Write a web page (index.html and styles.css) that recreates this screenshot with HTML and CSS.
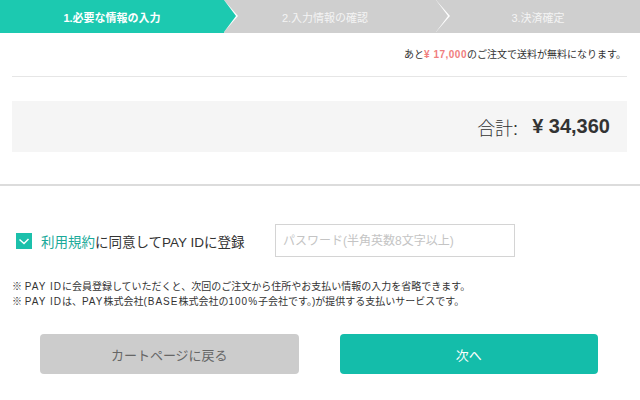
FILE: index.html
```html
<!DOCTYPE html>
<html lang="ja">
<head>
  <meta charset="UTF-8">
  <title>ご購入手続き</title>
  <link rel="stylesheet" href="styles.css">
</head>
<body>
  <!-- progress steps -->
  <ol class="steps">
    <li class="step step-1 current">1.必要な情報の入力</li>
    <li class="step step-2">2.入力情報の確認</li>
    <li class="step step-3">3.決済確定</li>
  </ol>

  <div class="content">
    <p class="shipping">あと<span class="price-left">¥ 17,000</span>のご注文で送料が無料になります。</p>

    <div class="total">
      <span class="total-label">合計:</span>
      <span class="total-price">¥ 34,360</span>
    </div>
  </div>

  <div class="register">
    <div class="register-row">
      <label class="agree">
        <span class="checkbox">
          <svg width="16" height="16" viewBox="0 0 16 16"><polyline points="3.5,6.5 8,10.5 12.5,6" fill="none" stroke="#fff" stroke-width="1.5"/></svg>
        </span>
        <span class="agree-text"><span class="terms">利用規約</span>に同意してPAY IDに登録</span>
      </label>
      <input class="password" type="password" placeholder="パスワード(半角英数8文字以上)">
    </div>

    <p class="notes">
      ※ <span class="latin">PAY ID</span>に会員登録していただくと、次回のご注文から住所やお支払い情報の入力を省略できます。<br>
      ※ <span class="latin">PAY ID</span>は、<span class="latin">PAY</span>株式会社<span class="latin">(BASE</span>株式会社の<span class="latin">100%</span>子会社です。)が提供する支払いサービスです。
    </p>

    <div class="buttons">
      <a class="btn btn-back" href="#">カートページに戻る</a>
      <a class="btn btn-next" href="#">次へ</a>
    </div>
  </div>
</body>
</html>
```

FILE: styles.css
```css
html {
  box-sizing: border-box;
}

*, *:before, *:after {
  box-sizing: inherit;
}

body {
  margin: 0;
  background: #fff;
  color: #333;
  font-family: "Liberation Sans", "Noto Sans CJK JP", sans-serif;
  font-size: 10px;
}

/* steps */
.steps {
  display: flex;
  margin: 0;
  padding: 0;
  list-style: none;
  height: 33px;
  background: #cfcfcf;
}

.step {
  position: relative;
  display: flex;
  align-items: center;
  justify-content: center;
  height: 33px;
  color: #f4f4f4;
  font-size: 11px;
  background: #cfcfcf;
}

.step-1 { width: 224px; z-index: 3; }
.step-2 { width: 212px; z-index: 2; padding-right: 10px; }
.step-3 { flex: 1; z-index: 1; }

.step.current {
  background: #1cc9b0;
  color: #fff;
  font-weight: bold;
}

.step-1::before,
.step-1::after,
.step-2::before,
.step-2::after {
  content: "";
  position: absolute;
  top: 0;
  width: 0;
  height: 0;
  border-top: 16.5px solid transparent;
  border-bottom: 16.5px solid transparent;
}

.step-1::before,
.step-2::before {
  right: -14px;
  border-left: 14px solid #fff;
}

.step-1::after,
.step-2::after {
  right: -12px;
  border-left: 12px solid #cfcfcf;
}

.step-1::after {
  border-left-color: #1cc9b0;
}

/* summary */
.content {
  padding: 0 13px 0 12px;
}

.shipping {
  margin: 15px 0 0;
  padding: 0 1px 14px 0;
  line-height: 14px;
  text-align: right;
  border-bottom: 1px solid #e6e6e6;
}

.price-left {
  color: #f07e7e;
  font-weight: bold;
  letter-spacing: 0.5px;
}

.total {
  display: flex;
  justify-content: flex-end;
  align-items: center;
  gap: 14px;
  margin-top: 24px;
  height: 51px;
  padding-right: 17px;
  background: #f5f5f5;
}

.total-label {
  font-size: 18px;
  font-weight: 300;
}

.total-price {
  font-size: 20px;
  font-weight: bold;
}

/* register */
.register {
  margin-top: 32px;
  border-top: 2px solid #dcdcdc;
}

.register-row {
  display: flex;
  align-items: center;
  margin-top: 38px;
  padding-left: 16px;
}

.agree {
  display: flex;
  align-items: center;
  gap: 9px;
  width: 259px;
  font-size: 13.5px;
}

.checkbox {
  display: flex;
  width: 16px;
  height: 16px;
  background: #1cc0ab;
}

.terms {
  color: #1aa999;
}

.password {
  width: 240px;
  height: 33px;
  padding: 0 7px;
  border: 1px solid #d4d4d4;
  font-family: inherit;
  font-size: 12px;
}

.password::placeholder {
  color: #c4c4c4;
}

.notes {
  margin: 22px 0 0;
  padding-left: 12px;
  line-height: 15px;
  font-size: 10px;
}

.latin {
  letter-spacing: 1px;
}

.buttons {
  display: flex;
  gap: 41px;
  margin-top: 25px;
  padding: 0 42px 0 40px;
}

.btn {
  flex: 1;
  display: flex;
  align-items: center;
  justify-content: center;
  height: 40px;
  border-radius: 4px;
  font-size: 13px;
  text-decoration: none;
}

.btn-back {
  background: #cccccc;
  color: #666;
}

.btn-next {
  background: #14bdaa;
  color: #fff;
}
```
